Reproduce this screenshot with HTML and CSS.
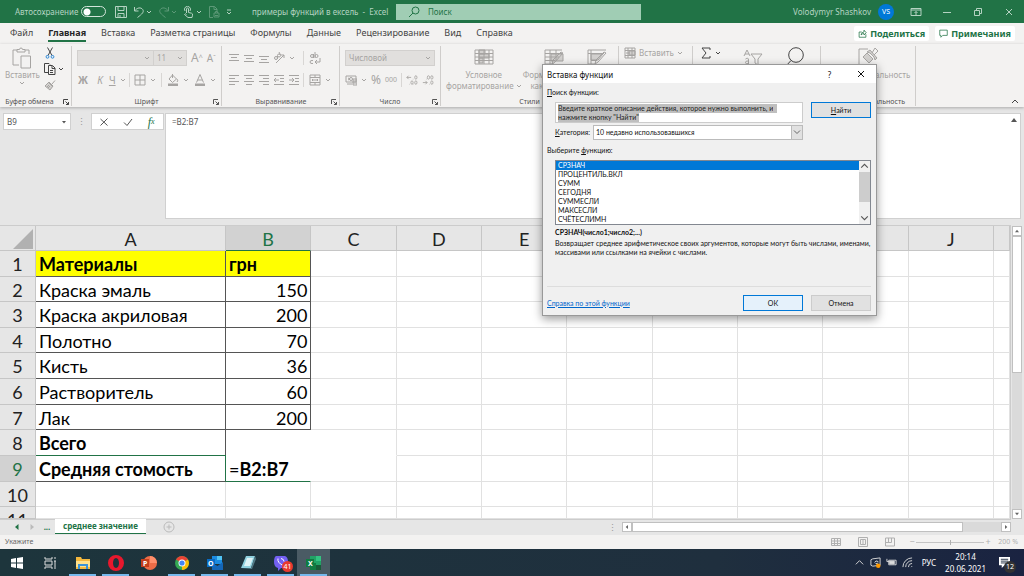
FILE: index.html
```html
<!DOCTYPE html>
<html lang="ru">
<head>
  <meta charset="UTF-8">
  <meta name="viewport" content="width=device-width, initial-scale=1.0">
  <title>примеры функций в ексель - Excel</title>
  <link rel="stylesheet" href="styles.css">
</head>
<body>

  <!-- Icons -->
  <svg class="sprite" aria-hidden="true">
    <symbol id="chev" viewBox="0 0 6 6"><path d="M1 2l2 2 2-2"/></symbol>
    <symbol id="save" viewBox="0 0 12 12"><path d="M.5.5h11v11H.5zM3 .5v4h6v-4M3 11.500V7.500h6v4M5 9v2.500"/></symbol>
    <symbol id="undo" viewBox="0 0 12 12"><path d="M1.500 1v4h4M1.800 4.800C4 1.500 8 1 9.700 3.500S9 8 4.500 11.500"/></symbol>
    <symbol id="touch" viewBox="0 0 12 12"><path d="M3.500 7V3a1 1 0 0 1 2 0v3.500l3 .7q1.500.5 1 2L9 11.500H5L1.500 8.500q.5-1.500 2 0M2 5a3 3 0 1 1 5 0"/></symbol>
    <symbol id="doc" viewBox="0 0 12 12"><path d="M5 11.500H1.500V.5h5L9 3v2M6 .5V3.500h3M6 7h5v4H6zM7.500 7V5.500h2V7M7 9.500h3"/></symbol>
    <symbol id="search" viewBox="0 0 12 12"><circle cx="7.500" cy="4.500" r="3.500"/><path d="M5 7L1 11"/></symbol>
    <symbol id="launch" viewBox="0 0 6 6"><path d="M.5 5V.5H5M2.500 2.500l3 3M5.500 3v2.500H3"/></symbol>
    <symbol id="paste" viewBox="0 0 20 22"><path d="M7 18H1V3h4M13 3h4v4M5 5h8V2.500h-2.500a1.500 1.500 0 0 0-3 0H5zM9 9h9.500v12H9z"/></symbol>
    <symbol id="cut" viewBox="0 0 10 12"><path d="M2.500.5l4.500 8M7.500.5L3 8.500"/><circle class="blue" cx="2.500" cy="9.800" r="1.400"/><circle class="blue" cx="7.500" cy="9.800" r="1.400"/></symbol>
    <symbol id="copy" viewBox="0 0 12 12"><path d="M4 9.500H.5v-9H5l1 1M4.500 2.500h4L11 5v6.500H4.500zM8 3v2.500h3M6 7.500h3M6 9.500h3"/></symbol>
    <symbol id="brush" viewBox="0 0 12 12"><path class="fill" d="M5 3l4 4-3 4L1 7z"/><path d="M8 5l3-3.500M4 3l5 5M3 8l2-2M4 9l2-2"/></symbol>
    <symbol id="borders" viewBox="0 0 12 12"><path d="M1 1h10v10H1zM6 1v10M1 6h10"/></symbol>
    <symbol id="bucket" viewBox="0 0 12 12"><path d="M5.500 1l4 4-4 3.500L2 5zM5.500 0v4M10 5q1.500 2 0 3"/><path class="solid" d="M1 9.500h10V12H1z"/></symbol>
    <symbol id="color" viewBox="0 0 12 12"><path d="M2.500 8.500L6 .5l3.500 8M3.500 6h5"/><path class="solid" d="M1 9.500h10V12H1z"/></symbol>
    <symbol id="al-top" viewBox="0 0 12 12"><path d="M1 2.500h10M3 5.500h6M1 8.500h10"/></symbol>
    <symbol id="al-mid" viewBox="0 0 12 12"><path d="M1 3.500h10M3 6.500h6M1 9.500h10"/></symbol>
    <symbol id="al-bot" viewBox="0 0 12 12"><path d="M1 4.500h10M3 7.500h6M1 10.500h10"/></symbol>
    <symbol id="left" viewBox="0 0 12 12"><path d="M1 1.500h10M1 4.500h6M1 7.500h10M1 10.500h6"/></symbol>
    <symbol id="center" viewBox="0 0 12 12"><path d="M1 1.500h10M3 4.500h6M1 7.500h10M3 10.500h6"/></symbol>
    <symbol id="right" viewBox="0 0 12 12"><path d="M1 1.500h10M5 4.500h6M1 7.500h10M5 10.500h6"/></symbol>
    <symbol id="indent" viewBox="0 0 12 12"><path d="M1 1.500h10M7 4.500h4M7 7.500h4M1 10.500h10M1 6h5M3 4L1 6l2 2"/></symbol>
    <symbol id="outdent" viewBox="0 0 12 12"><path d="M1 1.500h10M7 4.500h4M7 7.500h4M1 10.500h10M1 6h5M4 4l2 2-2 2"/></symbol>
    <symbol id="orient" viewBox="0 0 12 12"><path d="M3 11L11 3M8 3h3v3"/><circle cx="3" cy="6" r="1.500"/><circle cx="6" cy="3.500" r="1.500"/><path d="M4.500 7V4M6 0l1.500 3"/></symbol>
    <symbol id="wrap" viewBox="0 0 12 12"><circle cx="3" cy="4" r="1.500"/><circle cx="7.500" cy="4" r="1.500"/><path d="M4.500 2v4M6 0v6M4 8.500q-3-.5-3 1.500t3 1.500M11 6v4H6M8 8l-2 2 2 2"/></symbol>
    <symbol id="merge" viewBox="0 0 12 12"><path d="M1 1h10v10H1zM1 3.500h10M1 8.500h10M6 1v2.500M6 8.500V11M3 6h6M4 5L3 6l1 1M8 5l1 1-1 1"/></symbol>
    <symbol id="money" viewBox="0 0 12 12"><path d="M1 2h10v6H1zM2 10h5M3 4l2 1-2 1M8 5h4v6H8zM8 7h4M8 9h4"/><circle cx="6" cy="5" r="1.500"/></symbol>
    <symbol id="dec-add" viewBox="0 0 14 12"><path d="M1 3h5M3 1L1 3l2 2M8 5h.5M8 11h.5M4 11h.5"/><ellipse cx="11.500" cy="3" rx="1.300" ry="2"/><ellipse cx="11.500" cy="9" rx="1.300" ry="2"/><ellipse cx="7" cy="9" rx="1.300" ry="2"/></symbol>
    <symbol id="dec-del" viewBox="0 0 14 12"><path d="M1 9h5M4 7l2 2-2 2M5 5h.5M8.500 11H9"/><ellipse cx="7.500" cy="3" rx="1.300" ry="2"/><ellipse cx="11.500" cy="3" rx="1.300" ry="2"/><ellipse cx="11.500" cy="9" rx="1.300" ry="2"/></symbol>
    <symbol id="cond" viewBox="0 0 20 16"><path class="fill" d="M5 1h6v4H5zM5 5h10v4H5zM5 9h4v5H5z"/><path d="M1 1h18v14H1zM1 4.500h18M1 8h18M1 11.500h18M5 1v14M10 1v14M15 1v14"/></symbol>
    <symbol id="fmt" viewBox="0 0 20 16"><path class="fill" d="M7 5h12v7H7z"/><path d="M18 1H1v14h9M1 4.500h18M1 8h14M1 11.500h10M6 1v14M12 1v10M19 4l-8 9-3 2 1-4 8-8z"/></symbol>
    <symbol id="style" viewBox="0 0 20 16"><path class="fill" d="M4 5h12l-5 6H4z"/><path d="M19 1H1v14h7M1 4.500h16M4 1v14M4 11.500h6M19 4l-8 9-3 2 1-4 8-8z"/></symbol>
    <symbol id="ins" viewBox="0 0 12 12"><path class="fill" d="M5 4h6v4H5z"/><path d="M1 1h10v10H1zM1 3.500h10M1 8.500h10M4 1v10M8 1v10M2 6h4"/></symbol>
    <symbol id="sum" viewBox="0 0 12 12"><path d="M10 3V1H2l4 5-4 5h8V9"/></symbol>
    <symbol id="filter" viewBox="0 0 20 16"><path d="M1 7l3-6 3 6M2 5h4M2.500 10q3-2 3 1v4M5.500 12q-3-.5-3 1.500t3 1M8 5h11l-4 5v6l-3-2v-4z"/></symbol>
    <symbol id="find" viewBox="0 0 20 22"><circle cx="11" cy="8" r="7.300"/><path d="M6 13.500l-5 5.500"/></symbol>
    <symbol id="sens" viewBox="0 0 20 22"><path d="M9 19H1V2h9"/><path class="fill" d="M5 10l4-4 6 6-4 4zM9 5l3 1 4 4 1 3 2-2-7-8z"/><path d="M14 6l3-5 3 3-4 4"/></symbol>
    <symbol id="share" viewBox="0 0 12 12"><path d="M5 4H1.500v7h9V7M4 8q.5-4 4-4V1.500L11 5 8 8V6q-2.500 0-4 2z"/></symbol>
    <symbol id="note" viewBox="0 0 12 12"><path d="M1 1.500h10v7H5L2.500 11V8.500H1z"/></symbol>
  </svg>

  <!-- Title bar -->
  <header class="titlebar">
    <label class="autosave">Автосохранение <input type="checkbox" class="switch"></label>
    <div class="quick">
      <button aria-label="Сохранить"><svg class="ico"><use href="#save"/></svg></button>
      <button aria-label="Отменить"><svg class="ico"><use href="#undo"/></svg><svg class="chev"><use href="#chev"/></svg></button>
      <button class="dim" aria-label="Вернуть"><svg class="ico flip"><use href="#undo"/></svg><svg class="chev"><use href="#chev"/></svg></button>
      <button aria-label="Режим сенсора"><svg class="ico"><use href="#touch"/></svg><svg class="chev"><use href="#chev"/></svg></button>
      <button class="dim" aria-label="Просмотр"><svg class="ico"><use href="#doc"/></svg></button>
      <button aria-label="Настройка"><svg class="chev"><path d="M1 1h4M1 3l2 2 2-2"/></svg></button>
    </div>
    <span class="doc-name">примеры функций в ексель &nbsp;-&nbsp; Excel</span>
    <label class="search"><svg class="ico"><use href="#search"/></svg><input type="text" placeholder="Поиск" aria-label="Поиск"></label>
    <div class="account">Volodymyr Shashkov <span class="avatar">VS</span></div>
    <div class="window-buttons">
      <button aria-label="Лента"><svg viewBox="0 0 12 10"><path d="M1 1.500h10v7H1zM1 3h10M6 8V4.500M4.500 6L6 4.500 7.500 6"/></svg></button>
      <button aria-label="Свернуть"><svg viewBox="0 0 12 10"><path d="M2 5.500h8"/></svg></button>
      <button aria-label="Восстановить"><svg viewBox="0 0 12 10"><path d="M2.500 3.500h5v5h-5zM4.500 3.500v-2h5v5h-2"/></svg></button>
      <button aria-label="Закрыть"><svg viewBox="0 0 12 10"><path d="M3 2l6 6M9 2L3 8"/></svg></button>
    </div>
  </header>

  <!-- Tabs -->
  <nav class="tabs">
    <a href="#">Файл</a>
    <a href="#" class="active">Главная</a>
    <a href="#">Вставка</a>
    <a href="#">Разметка страницы</a>
    <a href="#">Формулы</a>
    <a href="#">Данные</a>
    <a href="#">Рецензирование</a>
    <a href="#">Вид</a>
    <a href="#">Справка</a>
    <div class="tab-actions">
      <button><svg><use href="#share"/></svg>Поделиться</button>
      <button><svg><use href="#note"/></svg>Примечания</button>
    </div>
  </nav>

  <!-- Ribbon -->
  <section class="ribbon">
    <div class="group g-clip">
      <div class="tools">
        <button class="big"><svg class="tall"><use href="#paste"/></svg><span>Вставить</span><svg class="chev"><use href="#chev"/></svg></button>
        <div class="stack">
          <button class="dark" aria-label="Вырезать"><svg class="ico"><use href="#cut"/></svg></button>
          <button class="dark" aria-label="Копировать"><svg class="ico"><use href="#copy"/></svg><svg class="chev"><use href="#chev"/></svg></button>
          <button aria-label="Формат по образцу"><svg class="ico"><use href="#brush"/></svg></button>
        </div>
      </div>
      <div class="caption">Буфер обмена<svg class="launch dark"><use href="#launch"/></svg></div>
    </div>

    <div class="group g-font">
      <div class="line">
        <span class="combo font-name"><select aria-label="Шрифт" disabled><option></option></select><svg class="chev"><use href="#chev"/></svg></span>
        <span class="combo font-size"><select aria-label="Размер" disabled><option>11</option></select><svg class="chev"><use href="#chev"/></svg></span>
        <button class="grow">A<sup>^</sup></button>
        <button class="shrink">A<sup>ˇ</sup></button>
      </div>
      <div class="line">
        <button class="letter"><b>Ж</b></button>
        <button class="letter"><i>К</i></button>
        <button class="letter"><u>Ч</u><svg class="chev"><use href="#chev"/></svg></button>
        <span class="sep"></span>
        <button aria-label="Границы"><svg class="ico"><use href="#borders"/></svg><svg class="chev"><use href="#chev"/></svg></button>
        <span class="sep"></span>
        <button aria-label="Заливка"><svg class="ico"><use href="#bucket"/></svg><svg class="chev"><use href="#chev"/></svg></button>
        <button aria-label="Цвет текста"><svg class="ico"><use href="#color"/></svg><svg class="chev"><use href="#chev"/></svg></button>
      </div>
      <div class="caption">Шрифт<svg class="launch"><use href="#launch"/></svg></div>
    </div>

    <div class="group g-align">
      <div class="line">
        <svg class="ico"><use href="#al-top"/></svg>
        <svg class="ico"><use href="#al-mid"/></svg>
        <svg class="ico"><use href="#al-bot"/></svg>
        <button class="orient" aria-label="Ориентация"><svg class="ico"><use href="#orient"/></svg><svg class="chev"><use href="#chev"/></svg></button>
        <span class="sep"></span>
        <svg class="ico"><use href="#wrap"/></svg>
      </div>
      <div class="line">
        <svg class="ico"><use href="#left"/></svg>
        <svg class="ico"><use href="#center"/></svg>
        <svg class="ico"><use href="#right"/></svg>
        <svg class="ico"><use href="#indent"/></svg>
        <svg class="ico"><use href="#outdent"/></svg>
        <span class="sep"></span>
        <button aria-label="Объединить"><svg class="ico"><use href="#merge"/></svg><svg class="chev"><use href="#chev"/></svg></button>
      </div>
      <div class="caption">Выравнивание<svg class="launch"><use href="#launch"/></svg></div>
    </div>

    <div class="group g-number">
      <div class="line">
        <span class="combo num-format"><select aria-label="Числовой формат" disabled><option>Числовой</option></select><svg class="chev"><use href="#chev"/></svg></span>
      </div>
      <div class="line">
        <button aria-label="Валюта"><svg class="ico"><use href="#money"/></svg><svg class="chev"><use href="#chev"/></svg></button>
        <button class="percent">%</button>
        <button class="thousand">000</button>
        <span class="sep"></span>
        <svg class="ico"><use href="#dec-add"/></svg>
        <svg class="ico"><use href="#dec-del"/></svg>
      </div>
      <div class="caption">Число<svg class="launch"><use href="#launch"/></svg></div>
    </div>

    <div class="group g-styles">
      <div class="tools">
        <button class="big"><svg class="wide"><use href="#cond"/></svg><span>Условное<br>форматирование <svg class="chev"><use href="#chev"/></svg></span></button>
        <button class="big"><svg class="wide"><use href="#fmt"/></svg><span>Форматировать<br>как таблицу</span></button>
        <button class="big"><svg class="wide"><use href="#style"/></svg><span>Стили<br>ячеек</span></button>
      </div>
      <div class="caption">Стили</div>
    </div>

    <div class="group g-cells">
      <button class="cell-btn"><svg class="ico"><use href="#ins"/></svg>Вставить<svg class="chev"><use href="#chev"/></svg></button>
      <div class="caption">Ячейки</div>
    </div>

    <div class="group g-edit">
      <div class="tools">
        <button class="dark sum" aria-label="Сумма"><svg class="ico"><use href="#sum"/></svg><svg class="chev"><use href="#chev"/></svg></button>
        <svg class="wide"><use href="#filter"/></svg>
        <svg class="tall dark"><use href="#find"/></svg>
      </div>
      <div class="caption">Редактирование</div>
    </div>

    <div class="group g-sens">
      <div class="tools">
        <button class="big"><svg class="tall"><use href="#sens"/></svg><span>Конфиденциальность</span></button>
      </div>
      <div class="caption">Конфиденциальность</div>
    </div>
    <button class="collapse dark" aria-label="Свернуть ленту"><svg viewBox="0 0 8 8"><path d="M1 5l3-3 3 3"/></svg></button>
  </section>

  <!-- Formula bar -->
  <section class="formula-bar">
    <label class="name-box"><input type="text" value="B9" aria-label="Имя"><svg viewBox="0 0 6 6"><path class="solid" d="M1 2h4L3 4.500z"/></svg></label>
    <span class="dots">⋮</span>
    <div class="fx-tools">
      <button aria-label="Отмена"><svg viewBox="0 0 10 10"><path d="M1.500 2l7 6.500M8.500 1.500L1.500 8.500"/></svg></button>
      <button aria-label="Ввод"><svg viewBox="0 0 10 10"><path d="M1 5.500L4 8.500 9 2"/></svg></button>
      <button class="fx">f<sub>x</sub></button>
    </div>
    <div class="formula"><textarea aria-label="Формула">=B2:B7</textarea><svg viewBox="0 0 6 6"><path class="solid" d="M0 5h6L3 1z"/></svg></div>
  </section>

  <!-- Sheet -->
  <main class="sheet">
    <table class="grid">
      <thead>
        <tr><th class="corner"><span></span></th><th>A</th><th class="picked">B</th><th>C</th><th>D</th><th>E</th><th>F</th><th>G</th><th>H</th><th>I</th><th>J</th><th></th></tr>
      </thead>
      <tbody>
        <tr><th>1</th><td class="box head">Материалы</td><td class="box head">грн</td><td></td><td></td><td></td><td></td><td></td><td></td><td></td><td></td><td></td></tr>
        <tr><th>2</th><td class="box">Краска эмаль</td><td class="box num">150</td><td></td><td></td><td></td><td></td><td></td><td></td><td></td><td></td><td></td></tr>
        <tr><th>3</th><td class="box">Краска акриловая</td><td class="box num">200</td><td></td><td></td><td></td><td></td><td></td><td></td><td></td><td></td><td></td></tr>
        <tr><th>4</th><td class="box">Полотно</td><td class="box num">70</td><td></td><td></td><td></td><td></td><td></td><td></td><td></td><td></td><td></td></tr>
        <tr><th>5</th><td class="box">Кисть</td><td class="box num">36</td><td></td><td></td><td></td><td></td><td></td><td></td><td></td><td></td><td></td></tr>
        <tr><th>6</th><td class="box">Растворитель</td><td class="box num">60</td><td></td><td></td><td></td><td></td><td></td><td></td><td></td><td></td><td></td></tr>
        <tr><th>7</th><td class="box">Лак</td><td class="box num">200</td><td></td><td></td><td></td><td></td><td></td><td></td><td></td><td></td><td></td></tr>
        <tr><th>8</th><td class="box bold">Всего</td><td class="open"></td><td class="no-bottom"></td><td></td><td></td><td></td><td></td><td></td><td></td><td></td><td></td></tr>
        <tr><th class="picked">9</th><td class="box bold before-edit">Средняя стомость</td><td class="editing">=<b>B2:B7</b></td><td></td><td></td><td></td><td></td><td></td><td></td><td></td><td></td><td></td></tr>
        <tr><th>10</th><td></td><td></td><td></td><td></td><td></td><td></td><td></td><td></td><td></td><td></td><td></td></tr>
        <tr><th>11</th><td></td><td></td><td></td><td></td><td></td><td></td><td></td><td></td><td></td><td></td><td></td></tr>
      </tbody>
    </table>
    <div class="vscroll">
      <button aria-label="Вверх"><svg viewBox="0 0 6 6"><path class="solid" d="M0 5h6L3 1z"/></svg></button>
      <span class="thumb"></span>
      <button aria-label="Вниз"><svg viewBox="0 0 6 6"><path class="solid" d="M0 1h6L3 5z"/></svg></button>
    </div>
  </main>

  <!-- Sheet tabs -->
  <div class="sheet-tabs">
    <button class="nav" aria-label="Назад"><svg viewBox="0 0 6 6"><path class="solid" d="M4.500 0v6L1 3z"/></svg></button>
    <button class="nav off" aria-label="Вперёд"><svg viewBox="0 0 6 6"><path class="solid" d="M1.500 0v6L5 3z"/></svg></button>
    <span class="more">...</span>
    <a href="#" class="sheet-tab">среднее значение</a>
    <button class="add" aria-label="Новый лист"><svg viewBox="0 0 12 12"><circle cx="6" cy="6" r="5"/><path d="M6 3.500v5M3.500 6h5"/></svg></button>
    <span class="dots">⋮</span>
    <div class="hscroll">
      <button aria-label="Влево"><svg viewBox="0 0 6 6"><path class="solid" d="M4.500 0v6L1 3z"/></svg></button>
      <span class="thumb"></span>
      <button aria-label="Вправо"><svg viewBox="0 0 6 6"><path class="solid" d="M1.500 0v6L5 3z"/></svg></button>
    </div>
  </div>

  <!-- Status bar -->
  <footer class="status">
    <span>Укажите</span>
    <div class="views">
      <svg viewBox="0 0 10 10"><path d="M.5 1.500h9v7h-9zM.5 4h9M.5 6.500h9M3.500 1.500v7M6.500 1.500v7"/></svg>
      <svg viewBox="0 0 10 10"><path d="M.5.5h9v9h-9zM2.500 2.500h5v5h-5zM4 4h2M4 6h2"/></svg>
      <svg viewBox="0 0 10 10"><path d="M.5 1h9v8h-9zM.5 5.500h6V1M3.500 1v4.500"/></svg>
    </div>
    <span class="sign">−</span>
    <input type="range" class="zoom" aria-label="Масштаб" disabled>
    <span class="sign">+</span>
    <span class="zoom-value">200 %</span>
  </footer>

  <!-- Taskbar -->
  <div class="taskbar">
    <button aria-label="Пуск"><svg viewBox="0 0 16 16"><path fill="#fff" d="M2 4l5-1v4.500H2zM8 3l6-1v5.500H8zM2 8.500h5V13l-5-1zM8 8.500h6V14l-6-1z"/></svg></button>
    <button aria-label="Представление задач"><svg viewBox="0 0 16 16"><path fill="none" stroke="#ddd" d="M3 2v2h7V2M3 14v-2h7v2M3 6h7v4H3zM13 2v2M13 6v8M12 6h2"/></svg></button>
    <button class="open" aria-label="Проводник"><svg viewBox="0 0 16 16"><path fill="#f5b83d" d="M1 2h5l1 2h8v10H1z"/><path fill="#ffe08a" d="M1 6h14v6H1z"/><path fill="#3b92d6" d="M3 9h10v5h-2v-3H5v3H3z"/></svg></button>
    <button class="open" aria-label="Opera"><svg viewBox="0 0 16 16"><path fill="#e8182d" fill-rule="evenodd" d="M8 0a8 8 0 1 1 0 16A8 8 0 0 1 8 0zm0 3C6 3 5 5.500 5 8s1 5 3 5 3-2.500 3-5-1-5-3-5z"/></svg></button>
    <button aria-label="PowerPoint"><svg viewBox="0 0 16 16"><circle cx="9" cy="8" r="7" fill="#ed6c47"/><path fill="#ff8f6b" d="M9 1a7 7 0 0 1 7 7H9z"/><path fill="#c43e1c" d="M0 4h8v8H0z"/><text x="2" y="11" class="app">P</text></svg></button>
    <button class="open" aria-label="Chrome"><svg viewBox="0 0 16 16"><circle cx="8" cy="8" r="7" fill="#34a853"/><path fill="#ea4335" d="M8 8L2 4.500a7 7 0 0 1 12 0z"/><path fill="#fbbc05" d="M8 8l6-3.500A7 7 0 0 1 8 15z"/><circle cx="8" cy="8" r="3.500" fill="#fff"/><circle cx="8" cy="8" r="2.600" fill="#4285f4"/></svg></button>
    <button class="open" aria-label="Outlook"><svg viewBox="0 0 16 16"><path fill="#1b8be0" d="M5 1h10v8H5z"/><path fill="#50c4f5" d="M10 1h5v4h-5z"/><path fill="#1466b8" d="M5 8l5.500 3L16 7v8H5z"/><path fill="#0a6cc4" d="M0 4h8v8H0z"/><text x="1" y="11" class="app">O</text></svg></button>
    <button class="open" aria-label="Блокнот"><svg viewBox="0 0 16 16"><path fill="#8fd0de" d="M6 1h9l-4 12H1z"/><path fill="#dff3f6" d="M7 3h6l-3 8H4z"/><path fill="#527b87" d="M15 1l1 3-4 10-11-1h10z"/></svg></button>
    <button class="open" aria-label="Viber"><svg viewBox="0 0 16 16"><path fill="#7360f2" d="M3 1h9q3 1 3 6t-3 6H8l-3 3v-3q-4-1-4-6t2-6z"/><path fill="none" stroke="#fff" d="M5 3.500q-1 4 5 7M8 3.500q3 .5 3 3"/></svg><span class="badge">41</span></button>
    <button class="open current" aria-label="Excel"><svg viewBox="0 0 16 16"><path fill="#21a366" d="M4 1h11v14H4z"/><path fill="#33c481" d="M10 1h5v5h-5z"/><path fill="#107c41" d="M4 8h6v7H4zM0 4h8v8H0z"/><path fill="#185c37" d="M10 10h5v5h-5z"/><text x="2" y="11" class="app">X</text></svg></button>
    <div class="tray">
      <svg viewBox="0 0 12 12"><path d="M2 8l4-4 4 4"/></svg>
      <svg viewBox="0 0 12 12"><path d="M3 2l8-1v8l-8 1-2-1V3zM5 6q1-3 4-1M9 6q-1 2-3 1"/><circle cx="9" cy="9.500" r="2.500" fill="#f90" stroke="none"/></svg>
      <svg viewBox="0 0 12 12"><path d="M3 3.500h8v5H3zM1 2v3h3"/><path fill="#ddd" d="M4 4.500h5v3H4z"/></svg>
      <svg viewBox="0 0 12 12"><path d="M1 11A10 10 0 0 1 11 1M4 11a7 7 0 0 1 7-7M7 11a4 4 0 0 1 4-4M10 11l1-1"/></svg>
      <span class="lang">РУС</span>
      <span class="clock">20:14<br>20.06.2021</span>
      <span class="notify"><svg viewBox="0 0 12 12"><path fill="#fff" stroke="none" d="M0 0h12v9H6l-3 3V9H0z"/><path stroke="#1e2c40" d="M2 2.500h8M2 4.500h8M2 6.500h6"/></svg><span class="count">12</span></span>
    </div>
  </div>

  <!-- Insert function dialog -->
  <div class="dialog" role="dialog" aria-labelledby="dlgTitle">
    <div class="dialog-head">
      <span id="dlgTitle">Вставка функции</span>
      <button aria-label="Справка">?</button>
      <button aria-label="Закрыть"><svg viewBox="0 0 10 10"><path d="M2 2l6 6M8 2L2 8"/></svg></button>
    </div>
    <div class="dialog-body">
      <label for="query"><u>П</u>оиск функции:</label>
      <div class="query-row">
        <textarea id="query">Введите краткое описание действия, которое нужно выполнить, и нажмите кнопку "Найти"</textarea>
        <button class="btn focus"><u>Н</u>айти</button>
      </div>
      <div class="category-row">
        <label for="category"><u>К</u>атегория:</label>
        <span class="drop"><select id="category"><option>10 недавно использовавшихся</option></select><svg viewBox="0 0 10 10"><path d="M2 3l3 3 3-3"/></svg></span>
      </div>
      <label for="funcs">Выберите <u>ф</u>ункцию:</label>
      <div class="list">
        <select id="funcs" size="7">
          <option selected>СРЗНАЧ</option>
          <option>ПРОЦЕНТИЛЬ.ВКЛ</option>
          <option>СУММ</option>
          <option>СЕГОДНЯ</option>
          <option>СУММЕСЛИ</option>
          <option>МАКСЕСЛИ</option>
          <option>СЧЁТЕСЛИМН</option>
        </select>
        <div class="rail">
          <svg viewBox="0 0 10 10"><path d="M2 6l3-3 3 3"/></svg>
          <span></span>
          <svg viewBox="0 0 10 10"><path d="M2 3l3 3 3-3"/></svg>
        </div>
      </div>
      <div class="about">
        <b>СРЗНАЧ(число1;число2;...)</b>
        <p>Возвращает среднее арифметическое своих аргументов, которые могут быть числами, именами, массивами или ссылками на ячейки с числами.</p>
      </div>
      <div class="dialog-foot">
        <a href="#">Справка по этой функции</a>
        <button class="btn primary">ОК</button>
        <button class="btn">Отмена</button>
      </div>
    </div>
  </div>

  <script>
    // Select the hint so typing replaces it
    const query = document.getElementById('query');
    query.focus();
    query.select();
  </script>
</body>
</html>
```
FILE: styles.css
```css
* {
  box-sizing: border-box;
}

body {
  margin: 0;
  height: 100vh;
  display: flex;
  flex-direction: column;
  overflow: hidden;
  position: relative;
  background: #e6e6e6;
  color: #444;
  font-family: "Noto Sans", "Open Sans", sans-serif;
  font-size: 8px;
  line-height: 10px;
}

button,
input,
select,
textarea {
  margin: 0;
  padding: 0;
  border: none;
  border-radius: 0;
  background: none;
  color: inherit;
  font: inherit;
  outline: none;
  appearance: none;
}

button {
  display: flex;
  align-items: center;
  justify-content: center;
}

a {
  color: inherit;
  text-decoration: none;
}

/* Icons */
svg {
  display: block;
  flex: none;
  fill: none;
  stroke: currentColor;
}
.sprite {
  position: absolute;
  width: 0;
  height: 0;
}
.ico {
  width: 12px;
  height: 12px;
}
.chev {
  width: 6px;
  height: 6px;
}
.wide {
  width: 20px;
  height: 16px;
}
.tall {
  width: 20px;
  height: 22px;
}
.flip {
  transform: scaleX(-1);
}
.blue {
  stroke: #2b88d8;
}
.fill {
  fill: #d2d0ce;
}
.solid {
  fill: currentColor;
  stroke: none;
}

/* Title bar */
.titlebar {
  flex: none;
  display: flex;
  align-items: center;
  height: 23px;
  padding-left: 15px;
  background: #217346;
  color: #b5d3c2;
}
.autosave {
  display: flex;
  align-items: center;
  justify-content: space-between;
  width: 91px;
}
.switch {
  width: 25px;
  height: 11px;
  border: 1px solid #d3e5da;
  border-radius: 6px;
  background: radial-gradient(circle at 5px 5px, #fff 3px, transparent 4px);
}
.quick {
  display: flex;
  gap: 6px;
  width: 146px;
  padding-left: 9px;
}
.quick button {
  gap: 1px;
}
.dim {
  opacity: 0.4;
}
.doc-name {
  width: 144px;
}
.search {
  display: flex;
  align-items: center;
  gap: 8px;
  flex: 0 1 245px;
  height: 16px;
  padding-left: 12px;
  background: #a0cdb4;
  color: #217346;
}
.search input::placeholder {
  color: #217346;
}
.account {
  display: flex;
  align-items: center;
  gap: 7px;
  margin-left: auto;
}
.avatar {
  width: 16px;
  height: 16px;
  border-radius: 50%;
  background: #0078d7;
  color: #fff;
  font-size: 7px;
  line-height: 16px;
  text-align: center;
}
.window-buttons {
  display: flex;
  padding-left: 6px;
}
.window-buttons button {
  width: 31px;
}
.window-buttons svg {
  width: 12px;
  height: 10px;
}

/* Tabs */
.tabs {
  flex: none;
  display: flex;
  align-items: center;
  gap: 15px;
  height: 21px;
  padding: 0 9px 0 10px;
  background: #f3f2f1;
  font-size: 9px;
}
.tabs a {
  line-height: 15px;
  border-bottom: 2px solid transparent;
}
.tabs .active {
  border-color: #217346;
  color: #262626;
  font-weight: bold;
}
.tab-actions {
  display: flex;
  gap: 6px;
  margin-left: auto;
}
.tab-actions button {
  gap: 3px;
  height: 15px;
  padding: 0 4px;
  border-radius: 2px;
  background: #fff;
  color: #217346;
  font-weight: bold;
}
.tab-actions svg {
  width: 9px;
  height: 9px;
}

/* Ribbon */
.ribbon {
  flex: none;
  display: flex;
  height: 63px;
  padding: 2px 0 1px;
  background: #f3f2f1;
  color: #a6a4a2;
  box-shadow: 0 1px 3px #aaa;
  z-index: 1;
}
.group {
  position: relative;
  display: flex;
  flex-direction: column;
  flex: none;
  padding: 1px 5px 0;
  border-right: 1px solid #cfcdcb;
}
.g-clip { width: 72px; }
.g-font { width: 150px; }
.g-align { width: 118px; }
.g-number { width: 101px; }
.g-styles { width: 178px; }
.g-cells { width: 74px; }
.g-edit { width: 128px; }
.g-sens { width: 95px; }
.caption {
  margin-top: auto;
  color: #555;
  font-size: 7px;
  line-height: 9px;
  text-align: center;
}
.g-clip .caption {
  padding-right: 12px;
}
.launch {
  position: absolute;
  right: 2px;
  bottom: 1px;
  width: 6px;
  height: 6px;
}
.dark {
  color: #444;
}
.tools {
  display: flex;
  gap: 4px;
}
.big {
  flex-direction: column;
  justify-content: flex-start;
  line-height: 11px;
  white-space: nowrap;
}
.big .wide {
  margin: 2px 0 4px;
}
.big span .chev {
  display: inline-block;
}
.stack {
  display: flex;
  flex-direction: column;
  align-items: flex-start;
  gap: 4px;
}
.stack button {
  gap: 2px;
}
.line {
  display: flex;
  align-items: center;
  gap: 4px;
  height: 22px;
}
.line button {
  gap: 4px;
}
.combo {
  flex: none;
  display: flex;
  align-items: center;
  height: 16px;
  padding: 0 3px;
  border: 1px solid #d2d0ce;
  background: #e1dfdd;
}
.combo select {
  flex: 1;
  min-width: 0;
  opacity: 1;
}
.font-name {
  width: 77px;
}
.font-size {
  width: 34px;
  margin-left: -5px;
}
.line .grow,
.line .shrink {
  gap: 0;
}
.grow {
  font-size: 12px;
}
.shrink {
  font-size: 10px;
}
.grow sup,
.shrink sup {
  font-size: 7px;
}
.letter {
  min-width: 12px;
  font-size: 10px;
}
.sep {
  width: 1px;
  height: 14px;
  background: #d8d6d4;
}
.g-font .line + .line {
  gap: 5px;
}
.g-align {
  padding-left: 6px;
}
.g-align .line {
  gap: 3px;
}
.g-align .sep {
  margin-right: 2px;
}
.orient {
  justify-content: flex-start;
  width: 27px;
}
.num-format {
  width: 90px;
}
.percent {
  font-size: 12px;
}
.thousand {
  font-size: 7px;
}
.g-styles .tools {
  gap: 1px;
}
.g-edit .tools {
  justify-content: space-between;
  padding-right: 10px;
}
.g-edit .wide {
  margin-top: 2px;
}
.g-edit .sum {
  gap: 3px;
  align-self: flex-start;
  padding-left: 2px;
}
.g-sens .big {
  width: 84px;
}
.cell-btn {
  justify-content: flex-start;
  gap: 3px;
  height: 12px;
}
.collapse {
  margin: auto 5px 0 auto;
}
.collapse svg {
  width: 8px;
  height: 8px;
}

/* Formula bar */
.formula-bar {
  flex: none;
  display: flex;
  align-items: flex-start;
  height: 119px;
  padding: 6px 3px 7px;
  color: #555;
}
.name-box,
.fx-tools,
.formula {
  display: flex;
  border: 1px solid #d0d0d0;
  background: #fff;
}
.name-box {
  align-items: center;
  width: 68px;
  height: 17px;
  padding: 0 3px;
}
.name-box input {
  flex: 1;
  min-width: 0;
}
.name-box svg,
.formula svg {
  width: 6px;
  height: 6px;
}
.dots {
  width: 20px;
  color: #999;
  font-size: 9px;
  line-height: 17px;
  text-align: center;
}
.fx-tools {
  width: 73px;
  height: 17px;
}
.fx-tools button {
  flex: 1;
}
.fx-tools svg {
  width: 10px;
  height: 10px;
}
.fx-tools .fx {
  color: #217346;
  font: italic 12px/14px "Liberation Serif", serif;
}
.fx sub {
  font-size: 8px;
}
.formula {
  flex: 1;
  align-self: stretch;
  margin-left: 1px;
  padding: 3px 3px 4px 6px;
}
.formula textarea {
  flex: 1;
  resize: none;
}

/* Sheet */
.sheet {
  flex: 1;
  min-height: 0;
  display: flex;
  gap: 2px;
  padding-right: 2px;
}
.grid {
  flex: 1;
  display: grid;
  grid-template-columns: 36px 190px repeat(9, 16fr) 3fr;
  grid-template-rows: 25px repeat(10, 26fr) 12fr;
  background: #fff;
  box-shadow: 0 0 0 1px #ccc;
  color: #000;
  font-family: Lato, "Noto Sans", sans-serif;
  font-size: 18px;
  line-height: 26px;
}
.grid thead,
.grid tbody,
.grid tr {
  display: contents;
}
.grid th,
.grid td {
  min-width: 0;
  min-height: 0;
  padding: 0 3px;
  overflow: hidden;
  white-space: nowrap;
  border-right: 1px solid #e1e1e1;
  border-bottom: 1px solid #e1e1e1;
}
.grid th {
  padding: 0;
  background: #e6e6e6;
  border-color: #c6c6c6;
  color: #222;
  font-weight: normal;
  text-align: center;
}
.grid .picked {
  background: #d2d2d2;
  color: #217346;
}
.grid thead .picked {
  border-bottom-color: #217346;
}
.grid .corner {
  padding: 3px 2px 2px 13px;
}
.corner span {
  display: block;
  height: 20px;
  background: #b1b1b1;
  clip-path: polygon(100% 0, 100% 100%, 0 100%);
}
.grid .box {
  border-color: #555;
}
.grid .head {
  background: #ff0;
  font-weight: bold;
}
.grid .bold {
  font-weight: bold;
}
.grid .num {
  text-align: right;
}
.grid .open {
  border-color: transparent;
}
.grid .no-bottom {
  border-bottom-color: transparent;
}
.grid .before-edit {
  border-right-color: #217346;
  box-shadow: 0 -1px #217346;
}
.grid .editing {
  border-right-color: transparent;
  border-bottom-color: #217346;
}

/* Scroll bars */
.vscroll,
.hscroll {
  display: flex;
  background: #dadada;
}
.vscroll {
  flex-direction: column;
  width: 10px;
}
.vscroll button,
.hscroll button,
.vscroll .thumb,
.hscroll .thumb {
  border: 1px solid #c0c0c0;
  background: #fff;
  color: #666;
}
.vscroll button,
.hscroll button {
  width: 10px;
  height: 10px;
}
.vscroll svg,
.hscroll svg {
  width: 4px;
  height: 4px;
}
.vscroll .thumb {
  height: 137px;
}
.vscroll button:last-child {
  margin-top: auto;
}

/* Sheet tabs */
.sheet-tabs {
  flex: none;
  display: flex;
  align-items: center;
  height: 16px;
  color: #217346;
}
.nav {
  width: 15px;
}
.nav:first-child {
  margin-left: 9px;
}
.nav svg {
  width: 6px;
  height: 6px;
}
.off {
  color: #bbb;
}
.more {
  width: 16px;
  text-align: center;
  font-weight: bold;
}
.sheet-tab {
  align-self: flex-start;
  height: 15px;
  padding: 0 8px;
  border-bottom: 1px solid #217346;
  background: #fff;
  font-weight: bold;
  line-height: 13px;
}
.add {
  margin-left: 17px;
  color: #bbb;
}
.add svg {
  width: 12px;
  height: 12px;
}
.sheet-tabs .dots {
  width: 18px;
  margin-left: auto;
}
.hscroll {
  width: 38%;
  margin-right: 13px;
}
.hscroll .thumb {
  width: 331px;
}
.hscroll button:last-child {
  margin-left: auto;
}

/* Status bar */
.status {
  flex: none;
  display: flex;
  align-items: center;
  height: 14px;
  padding: 0 6px 0 5px;
  background: #f3f2f1;
  color: #666;
  font-size: 7px;
}
.views {
  display: flex;
  gap: 17px;
  margin: 0 13px 0 auto;
  color: #b0b0b0;
}
.views svg {
  width: 10px;
  height: 10px;
}
.sign {
  width: 8px;
  color: #b0b0b0;
  font-size: 9px;
  text-align: center;
}
.zoom {
  width: 68px;
  height: 8px;
  background: linear-gradient(#c4c4c4, #c4c4c4) center / 100% 1px no-repeat;
}
.zoom::-webkit-slider-thumb {
  appearance: none;
  width: 1px;
  height: 5px;
  background: #b0b0b0;
}
.zoom-value {
  width: 26px;
  color: #b0b0b0;
  text-align: right;
}

/* Taskbar */
.taskbar {
  flex: none;
  display: flex;
  height: 27px;
  background: linear-gradient(90deg, #1d353c, #1f2f3e 70%, #1a2341);
  color: #fff;
}
.taskbar > button {
  position: relative;
  width: 33px;
}
.taskbar > button > svg {
  width: 16px;
  height: 16px;
  stroke: none;
}
.taskbar .open {
  background: linear-gradient(#76b9ed, #76b9ed) center bottom / 27px 2px no-repeat;
}
.taskbar .current {
  background-color: #4a5b64;
}
.app {
  fill: #fff;
  font-size: 7px;
  font-weight: bold;
}
.badge {
  position: absolute;
  right: 4px;
  bottom: 4px;
  width: 11px;
  height: 11px;
  border-radius: 50%;
  background: #e8392f;
  font-size: 7px;
  line-height: 11px;
}
.tray {
  display: flex;
  align-items: center;
  gap: 5px;
  margin-left: auto;
  padding-right: 14px;
}
.tray svg {
  width: 11px;
  height: 11px;
  color: #ddd;
}
.lang {
  padding: 0 4px;
}
.clock {
  line-height: 12px;
  text-align: center;
}
.notify {
  position: relative;
  margin-left: 8px;
}
.count {
  position: absolute;
  left: 5px;
  top: 4px;
  width: 12px;
  height: 12px;
  border-radius: 50%;
  background: #333;
  font-size: 7px;
  line-height: 12px;
  text-align: center;
}

/* Dialog */
.dialog {
  position: absolute;
  right: 147px;
  top: 64px;
  z-index: 2;
  width: 335px;
  border: 1px solid #999;
  background: #f0f0f0;
  color: #111;
  font-family: Lato, "Noto Sans", sans-serif;
  font-size: 7px;
  line-height: 9px;
  box-shadow: 0 3px 9px rgba(0, 0, 0, 0.4);
}
.dialog-head {
  display: flex;
  align-items: center;
  height: 18px;
  padding-left: 4px;
  background: #fff;
  font-family: "Noto Sans", sans-serif;
  font-size: 8px;
}
.dialog-head span {
  flex: 1;
}
.dialog-head button {
  width: 31px;
}
.dialog-head svg {
  width: 10px;
  height: 10px;
}
.dialog-body {
  padding: 5px 5px 4px 4px;
}
.dialog-body label {
  display: block;
}
.query-row {
  display: flex;
  gap: 8px;
  padding: 5px 0 2px 8px;
}
.query-row textarea {
  flex: 1;
  height: 21px;
  padding: 1px 2px;
  border: 1px solid #ccc;
  background: #fff;
  resize: none;
  overflow: hidden;
}
.query-row textarea::selection {
  background: #bfbfbf;
  color: #222;
}
.btn {
  width: 60px;
  height: 16px;
  border: 1px solid #ccc;
  background: #e1e1e1;
}
.focus {
  border-color: #0078d7;
}
.primary {
  border-color: #0078d7;
  background: #e5f1fb;
}
.category-row {
  display: flex;
  align-items: center;
  gap: 3px;
  padding: 0 68px 6px 8px;
}
.drop {
  flex: 1;
  display: flex;
  height: 15px;
  border: 1px solid #bbb;
  background: #fff;
}
.drop select {
  flex: 1;
  padding-left: 2px;
}
.drop svg {
  width: 11px;
  height: 13px;
  border-left: 1px solid #bbb;
  background: #e1e1e1;
  color: #666;
}
.list {
  display: flex;
  height: 65px;
  margin: 5px 0 3px 8px;
  border: 1px solid #828790;
  background: #fff;
}
.list select {
  flex: 1;
  overflow: hidden;
}
.list option {
  min-height: 9px;
  padding: 0 2px;
}
.list option:checked {
  background: linear-gradient(#0078d7, #0078d7);
  -webkit-text-fill-color: #fff;
}
.rail {
  display: flex;
  flex-direction: column;
  justify-content: space-between;
  width: 11px;
  background: #f0f0f0;
  color: #555;
}
.rail svg {
  width: 11px;
  height: 11px;
}
.rail span {
  height: 30px;
  margin-bottom: 11px;
  background: #cdcdcd;
}
.about {
  height: 58px;
  padding-left: 8px;
}
.about p {
  margin: 2px 0 0;
}
.dialog-foot {
  display: flex;
  align-items: center;
  gap: 8px;
  padding-top: 8px;
  border-top: 1px solid #ddd;
}
.dialog-foot a {
  margin-right: auto;
  color: #0066cc;
  text-decoration: underline;
}
```
